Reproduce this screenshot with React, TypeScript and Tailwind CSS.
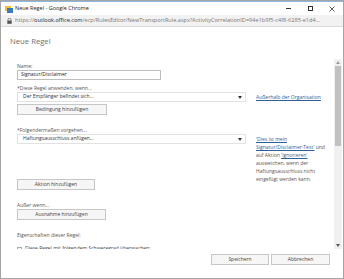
import React from "react";

const F = { fontFamily: '"Open Sans", "Noto Sans", sans-serif' };

function Btn({ label, w }: { label: string; w: string }) {
  return (
    <div
      className={`${w} h-[11px] border border-[#c6c6c6] bg-[#f6f6f6] flex items-center justify-center text-[5px] text-[#444]`}
    >
      {label}
    </div>
  );
}

function Select({ label }: { label: string }) {
  return (
    <div className="w-[229px] h-[10px] border border-[#e2e2e2] bg-white flex items-center justify-between pl-[5px] pr-[3px] text-[5px] text-[#333]">
      <span>{label}</span>
      <svg width="4" height="3" viewBox="0 0 4 3">
        <path d="M0 0 L4 0 L2 3 Z" fill="#333" />
      </svg>
    </div>
  );
}

const L = "text-[#2f5f96] underline";

export default function App() {
  return (
    <div
      className="w-[344px] h-[279px] border border-[#a5a5a5] bg-white flex flex-col overflow-hidden"
      style={F}
    >
      {/* title bar */}
      <div className="h-[14px] shrink-0 bg-white flex items-center pl-[4px] text-[5.5px] text-[#222] border-t border-[#8fb8e0]">
        <svg width="8" height="8" viewBox="0 0 8 8" className="mr-[2px]">
          <rect x="0" y="1" width="6" height="5" fill="#f1c232" />
          <rect x="2" y="3" width="6" height="5" fill="#3b78c4" />
        </svg>
        <span>Neue Regel - Google Chrome</span>
        <div className="ml-auto flex items-center text-[#333]">
          <div className="w-[22px] flex justify-center">
            <div className="w-[5px] h-[1px] bg-[#333]" />
          </div>
          <div className="w-[22px] flex justify-center">
            <div className="w-[5px] h-[5px] border border-[#333]" />
          </div>
          <div className="w-[22px] flex justify-center">
            <svg width="6" height="6" viewBox="0 0 6 6">
              <path d="M0.5 0.5 L5.5 5.5 M5.5 0.5 L0.5 5.5" stroke="#333" strokeWidth="0.8" />
            </svg>
          </div>
        </div>
      </div>
      {/* address bar */}
      <div className="h-[12px] shrink-0 bg-[#f2f2f2] flex items-center pl-[6px] text-[5.6px] text-[#777] whitespace-nowrap overflow-hidden border-b border-[#dadada]">
        <svg width="5" height="6" viewBox="0 0 5 6" className="mr-[3px] shrink-0">
          <path d="M1 2.5 V1.6 A1.5 1.5 0 0 1 4 1.6 V2.5" stroke="#555" strokeWidth="0.7" fill="none" />
          <rect x="0.3" y="2.5" width="4.4" height="3.3" fill="#555" />
        </svg>
        <span>
          https://<span className="text-[#222]">outlook.office.com</span>
          /ecp/RulesEditor/NewTransportRule.aspx?ActivityCorrelationID=94e1b9f5-c4f8-6285-e1d4...
        </span>
      </div>
      {/* heading */}
      <div className="h-[32px] shrink-0 flex items-start pt-[9px] pl-[9px] text-[7.7px] text-[#707070]">
        Neue Regel
      </div>
      {/* scroll area */}
      <div className="flex-1 flex min-h-0">
        <div className="flex-1 overflow-hidden pl-[16px] pt-[3px] text-[5px] text-[#555]">
          <div className="leading-[8px]">Name:</div>
          <div className="w-[144px] h-[10px] border border-[#bdbdbd] flex items-center pl-[3px] text-[#222]">
            Signatur/Disclaimer
          </div>
          <div className="leading-[8px] mt-[4px]">*Diese Regel anwenden, wenn...</div>
          <div className="flex">
            <div>
              <Select label="Der Empfänger befindet sich..." />
              <div className="mt-[2px]">
                <Btn label="Bedingung hinzufügen" w="w-[90px]" />
              </div>
            </div>
            <div className={`ml-[10px] pt-[2px] ${L}`}>Außerhalb der Organisation</div>
          </div>
          <div className="leading-[8px] mt-[11px]">*Folgendermaßen vorgehen...</div>
          <div className="flex">
            <div>
              <Select label="Haftungsausschluss anfügen..." />
              <div className="mt-[35px]">
                <Btn label="Aktion hinzufügen" w="w-[78px]" />
              </div>
            </div>
            <div className="ml-[10px] w-[74px] leading-[8px] pt-[1px] text-[#555] whitespace-nowrap">
              <div><span className={L}>'Dies ist mein</span></div>
              <div><span className={L}>Signatur/Disclaimer-Text'</span> und</div>
              <div>auf Aktion <span className={L}>'Ignorieren'</span></div>
              <div>ausweichen, wenn der</div>
              <div>Haftungsausschluss nicht</div>
              <div>eingefügt werden kann.</div>
            </div>
          </div>
          <div className="leading-[8px] mt-[11px]">Außer wenn...</div>
          <Btn label="Ausnahme hinzufügen" w="w-[89px]" />
          <div className="leading-[8px] mt-[11px]">Eigenschaften dieser Regel:</div>
          <div className="flex items-center mt-[6px] h-[8px] text-[#444] whitespace-nowrap">
            <div className="w-[5px] h-[5px] border border-[#aaa] bg-[#f4f4f4] mr-[3px]" />
            Diese Regel mit folgendem Schweregrad überwachen:
          </div>
        </div>
        {/* scrollbar */}
        <div className="w-[8px] mr-[1px] bg-[#f0f0f0] flex flex-col items-center">
          <div className="h-[7px] flex items-center">
            <svg width="4" height="3" viewBox="0 0 4 3">
              <path d="M0 3 L4 3 L2 0 Z" fill="#999" />
            </svg>
          </div>
          <div className="w-[6px] h-[80px] bg-[#c1c1c1]" />
          <div className="flex-1" />
          <div className="h-[7px] flex items-center">
            <svg width="4" height="3" viewBox="0 0 4 3">
              <path d="M0 0 L4 0 L2 3 Z" fill="#555" />
            </svg>
          </div>
        </div>
      </div>
      {/* footer */}
      <div className="h-[29px] shrink-0 flex items-start justify-end pr-[13px] pt-[5px] gap-[2px]">
        <Btn label="Speichern" w="w-[58px]" />
        <Btn label="Abbrechen" w="w-[59px]" />
      </div>
    </div>
  );
}
